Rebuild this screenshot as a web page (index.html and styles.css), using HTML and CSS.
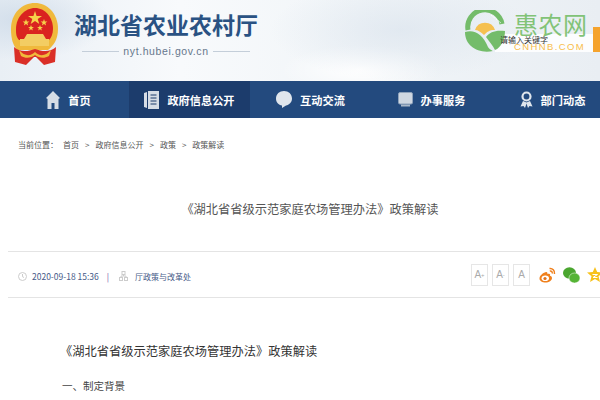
FILE: index.html
```html
<!DOCTYPE html>
<html lang="zh-CN">
<head>
    <meta charset="UTF-8">
    <meta name="viewport" content="width=device-width, initial-scale=1.0">
    <title>湖北省农业农村厅</title>
    <link rel="stylesheet" href="styles.css">
</head>
<body>
    <header class="top">
        <svg class="emblem" width="48" height="64" viewBox="0 0 48 64">
            <path d="M24 1C36 1 47 11 47 27C47 38 42 44 37 48L6 48C2 43 0 37 0 27C0 11 11 1 24 1Z" fill="#f0b93c"/>
            <path d="M24 6C34 6 42 15 42 27C42 32 40 36 38 38L8 38C5 35 5 31 5 27C5 15 14 6 24 6Z" fill="#da2320"/>
            <polygon points="24,9 25.6,14 31,14 26.7,17 28.3,22 24,19 19.7,22 21.3,17 17,14 22.4,14" fill="#f6d24a"/>
            <polygon points="15,17 15.9,19.4 18.4,19.4 16.4,21 17.1,23.4 15,22 12.9,23.4 13.6,21 11.6,19.4 14.1,19.4" fill="#f6d24a"/>
            <polygon points="33,17 33.9,19.4 36.4,19.4 34.4,21 35.1,23.4 33,22 30.9,23.4 31.6,21 29.6,19.4 32.1,19.4" fill="#f6d24a"/>
            <polygon points="20,23 20.8,25 23,25 21.2,26.3 21.8,28.4 20,27.2 18.2,28.4 18.8,26.3 17,25 19.2,25" fill="#f6d24a"/>
            <polygon points="29,23 29.8,25 32,25 30.2,26.3 30.8,28.4 29,27.2 27.2,28.4 27.8,26.3 26,25 28.2,25" fill="#f6d24a"/>
            <path d="M16 32L32 32L35 37L38 37L38 44L9 44L9 37L13 37Z" fill="#f3cd63"/>
            <path d="M3 45C8 50 16 50 24 47C32 50 40 50 45 45L44 60L33 63L25 55L23 55L15 63L4 60Z" fill="#da2f27"/>
            <path d="M8 48C14 55 20 54 24 50C28 54 34 55 40 48L38 54C33 57 28 56 24 53C20 56 15 57 10 54Z" fill="#f0b93c"/>
        </svg>
        <div class="site-name">
            <h1>湖北省农业农村厅</h1>
            <p><span class="rule"></span>nyt.hubei.gov.cn<span class="rule"></span></p>
        </div>
        <div class="search">
            <span class="search-hint">请输入关键字</span>
            <span class="search-btn"></span>
        </div>
        <div class="brand">
            <svg class="brand-logo" width="42" height="42" viewBox="0 0 42 42">
                <path d="M4 20A17 17 0 0 1 38 14" fill="none" stroke="#74bc6a" stroke-width="5"/>
                <path d="M27 5L37 13" fill="none" stroke="#fff" stroke-width="1" stroke-dasharray="2 1"/>
                <path d="M11 20A10.500 10.500 0 0 1 31 20C25 20 23 22 20 25C17 22 14 20 11 20Z" fill="#f5c04f"/>
                <path d="M1 22C10 19 19 24 24 37C25 39 29 41 29 41C14 44 1 36 1 22Z" fill="#74bc6a"/>
                <path d="M22 27C26 22 31 20 41 21C41 29 37 38 31 40C29 36 25 31 22 27Z" fill="#74bc6a"/>
            </svg>
            <div class="brand-text">
                <b>惠农网</b>
                <span>CNHNB.COM</span>
            </div>
        </div>
    </header>

    <nav class="nav">
        <a class="nav-item">
            <svg width="14" height="18" viewBox="0 0 14 18"><path d="M7 0L14 7L12.500 8V18H8.500V12H5.500V18H1.500V8L0 7Z" fill="#d6dde6"/></svg>
            首页
        </a>
        <a class="nav-item active">
            <svg width="15" height="18" viewBox="0 0 15 18"><path d="M0 2L3 1V17L0 16Z" fill="#d6dde6"/><path d="M4 0H15V18H4Z" fill="#d6dde6"/><path d="M6.500 4H12.500M6.500 7H12.500M6.500 10H12.500M6.500 13H12.500" stroke="#1c3c6c" stroke-width="1"/></svg>
            政府信息公开
        </a>
        <a class="nav-item">
            <svg width="16" height="17" viewBox="0 0 16 17"><path d="M8 0C12.500 0 16 3 16 7.500C16 11.500 13 14 10 14.500L6 17V14.500C2.500 14 0 11.500 0 7.500C0 3 3.500 0 8 0Z" fill="#dfe5ec"/></svg>
            互动交流
        </a>
        <a class="nav-item">
            <svg width="15" height="15" viewBox="0 0 15 15"><rect x="0.500" y="0.500" width="14" height="11.500" rx="1.500" fill="#cfd7e1" stroke="#8fa2ba"/><rect x="3" y="12.500" width="9" height="2" fill="#a9b8c9"/></svg>
            办事服务
        </a>
        <a class="nav-item">
            <svg width="13" height="17" viewBox="0 0 13 17"><circle cx="6.500" cy="5.500" r="4" fill="none" stroke="#dfe5ec" stroke-width="2.200"/><path d="M3 10L0.500 15.500L3.500 15L5 17L6.500 12.500L8 17L9.500 15L12.500 15.500L10 10L6.500 11.500Z" fill="#dfe5ec"/></svg>
            部门动态
        </a>
    </nav>

    <main class="page">
        <div class="crumbs">
            <span class="crumb-label">当前位置：</span>
            <span>首页</span><i>&gt;</i>
            <span>政府信息公开</span><i>&gt;</i>
            <span>政策</span><i>&gt;</i>
            <span>政策解读</span>
        </div>

        <h2 class="title">《湖北省省级示范家庭农场管理办法》政策解读</h2>

        <div class="meta">
            <svg width="9" height="9" viewBox="0 0 9 9"><circle cx="4.500" cy="4.500" r="4" fill="none" stroke="#ccc"/><path d="M4.500 2V4.700L6 5.500" fill="none" stroke="#ccc"/></svg>
            <span class="meta-date">2020-09-18 15:36</span>
            <span class="meta-bar">|</span>
            <svg width="9" height="10" viewBox="0 0 9 10"><rect x="3" y="0.500" width="3" height="3" fill="none" stroke="#ccc"/><rect x="0.500" y="6.500" width="3" height="3" fill="none" stroke="#ccc"/><rect x="5.500" y="6.500" width="3" height="3" fill="none" stroke="#ccc"/><path d="M4.500 3.500V5H2V6.500M4.500 5H7V6.500" fill="none" stroke="#ccc"/></svg>
            <span class="meta-dept">厅政策与改革处</span>
            <div class="tools">
                <span class="size-btn">A<sup>+</sup></span>
                <span class="size-btn">A<sup>-</sup></span>
                <span class="size-btn">A</span>
                <svg class="share weibo" width="17" height="16" viewBox="0 0 17 16"><path d="M7 5C3.500 6 0.500 9 0.500 11.500C0.500 14 3.500 15.500 6.500 15.500C10 15.500 13 13.500 13 11C13 9.500 11.500 9 11 8.800C11.500 7.500 11 6 8.500 7C8.500 5.500 8 4.700 7 5Z" fill="#f0801d"/><ellipse cx="6.300" cy="11.300" rx="3.700" ry="2.800" fill="#fff"/><circle cx="6" cy="11.500" r="1.600" fill="#e0701a"/><path d="M10.500 1.500C13.500 1 16 3.500 15.500 7M10.800 4C12.500 3.700 13.500 5 13.200 6.500" fill="none" stroke="#f0801d" stroke-width="1.500"/></svg>
                <svg class="share" width="17" height="16" viewBox="0 0 17 16"><ellipse cx="6.500" cy="6" rx="6.500" ry="5.800" fill="#4aa62f"/><ellipse cx="11.500" cy="11" rx="5.500" ry="5" fill="#55b435" stroke="#fff" stroke-width="0.500"/></svg>
                <svg class="share" width="16" height="15" viewBox="0 0 16 15"><polygon points="8,0 10.200,5 16,5.500 11.500,9.200 13,15 8,12 3,15 4.500,9.200 0,5.500 5.800,5" fill="#f7c21c"/><path d="M5.500 7.500H10.500L6 10.500H10.500" fill="none" stroke="#fff"/></svg>
            </div>
        </div>

        <article class="content">
            <h3>《湖北省省级示范家庭农场管理办法》政策解读</h3>
            <p>一、制定背景</p>
        </article>
    </main>
</body>
</html>
```

FILE: styles.css
```css
html, body {
    height: 400px;
    overflow: hidden;
}
body {
    margin: 0;
    font-family: "Noto Sans CJK SC", "Liberation Sans", sans-serif;
    background: #fff;
    color: #333;
}
.top {
    position: relative;
    display: flex;
    height: 81px;
    padding: 2px 0 0 11px;
    box-sizing: border-box;
    background:
        radial-gradient(ellipse 130px 50px at 400px 30px, rgba(214, 224, 235, 0.55), transparent),
        radial-gradient(ellipse 90px 40px at 20px 20px, rgba(205, 218, 232, 0.8), transparent),
        radial-gradient(ellipse 80px 25px at 360px 70px, #fff, transparent),
        linear-gradient(to right, #e9eff5 0%, #f8fafc 30%, #f1f5f8 60%, #e9eef3 100%);
}
.emblem {
    flex-shrink: 0;
}
.site-name {
    margin: 8px 0 0 15px;
    text-align: center;
}
.site-name h1 {
    margin: 0;
    font-size: 23px;
    line-height: 28px;
    font-weight: 700;
    color: #2a5283;
}
.site-name p {
    display: flex;
    align-items: center;
    justify-content: center;
    gap: 4px;
    margin: 6px 0 0;
    font-size: 10.500px;
    line-height: 14px;
    letter-spacing: 0.600px;
    font-family: "Liberation Sans", sans-serif;
    color: #66778c;
}
.rule {
    width: 37px;
    height: 1px;
    background: #c4ced9;
}
.search {
    position: absolute;
    top: 34px;
    left: 495px;
    display: flex;
    width: 105px;
    height: 18px;
    background: rgba(255, 255, 255, 0.85);
}
.search-hint {
    position: relative;
    z-index: 1;
    margin-left: 5px;
    font-size: 8px;
    line-height: 11px;
    color: #333;
}
.search-btn {
    position: absolute;
    top: -7px;
    right: 0;
    width: 7px;
    height: 25px;
    background: #f5a32d;
}
.brand {
    position: absolute;
    top: 10px;
    left: 464px;
    display: flex;
    gap: 8px;
    pointer-events: none;
}
.brand-text {
    display: flex;
    flex-direction: column;
    margin-top: 2px;
}
.brand-text b {
    font-size: 24px;
    line-height: 24px;
    font-weight: 400;
    letter-spacing: 0.500px;
    color: #82c377;
}
.brand-text span {
    margin: 5px 0 0 0;
    font-family: "Liberation Sans", sans-serif;
    font-size: 9.500px;
    line-height: 11px;
    letter-spacing: 1.400px;
    color: #f8bd4c;
}
.nav {
    display: flex;
    height: 37px;
    padding-left: 8px;
    background: #234a7e;
}
.nav-item {
    display: flex;
    flex-shrink: 0;
    align-items: center;
    justify-content: center;
    gap: 8px;
    width: 121px;
    font-size: 11.200px;
    font-weight: 700;
    color: #fff;
}
.nav-item.active {
    background: #1c3c6c;
}
.page {
    padding-left: 8px;
}
.crumbs {
    display: flex;
    align-items: center;
    height: 14px;
    margin: 19px 0 0 10px;
    font-size: 8px;
    color: #555;
}
.crumb-label {
    margin-right: 5px;
}
.crumbs i {
    margin: 0 6px;
    font-style: normal;
}
.title {
    margin: 0;
    height: 101px;
    box-sizing: border-box;
    padding: 49px 0 0 12px;
    width: 592px;
    font-size: 12.250px;
    line-height: 18px;
    font-weight: 400;
    text-align: center;
    color: #555;
    border-bottom: 1px solid #e4e4e4;
}
.meta {
    display: flex;
    align-items: center;
    height: 46px;
    box-sizing: border-box;
    padding: 3px 0 0 10px;
    font-size: 8.500px;
    border-bottom: 1px solid #e4e4e4;
}
.meta-date {
    margin-left: 5px;
    color: #465a87;
}
.meta-bar {
    margin: 0 10px 0 8px;
    color: #6a4fa8;
}
.meta-dept {
    margin-left: 7px;
    font-size: 8px;
    color: #465a87;
}
.tools {
    display: flex;
    align-items: center;
    gap: 4px;
    margin: -3px -3px 0 auto;
}
.size-btn {
    display: flex;
    align-items: center;
    justify-content: center;
    width: 15px;
    height: 20px;
    border: 1px solid #e6e6e6;
    font-family: "Liberation Sans", sans-serif;
    font-size: 10px;
    color: #aaa;
}
.size-btn sup {
    font-size: 6px;
    line-height: 1;
}
.share {
    flex-shrink: 0;
    margin-left: 3px;
}
.share.weibo {
    margin-left: 5px;
}
.content {
    padding-left: 52px;
}
.content h3 {
    margin: 44px 0 0;
    font-size: 12.250px;
    line-height: 18px;
    font-weight: 400;
    color: #333;
}
.content p {
    margin: 18px 0 0 2px;
    font-size: 10.500px;
    line-height: 16px;
    color: #444;
}
```
